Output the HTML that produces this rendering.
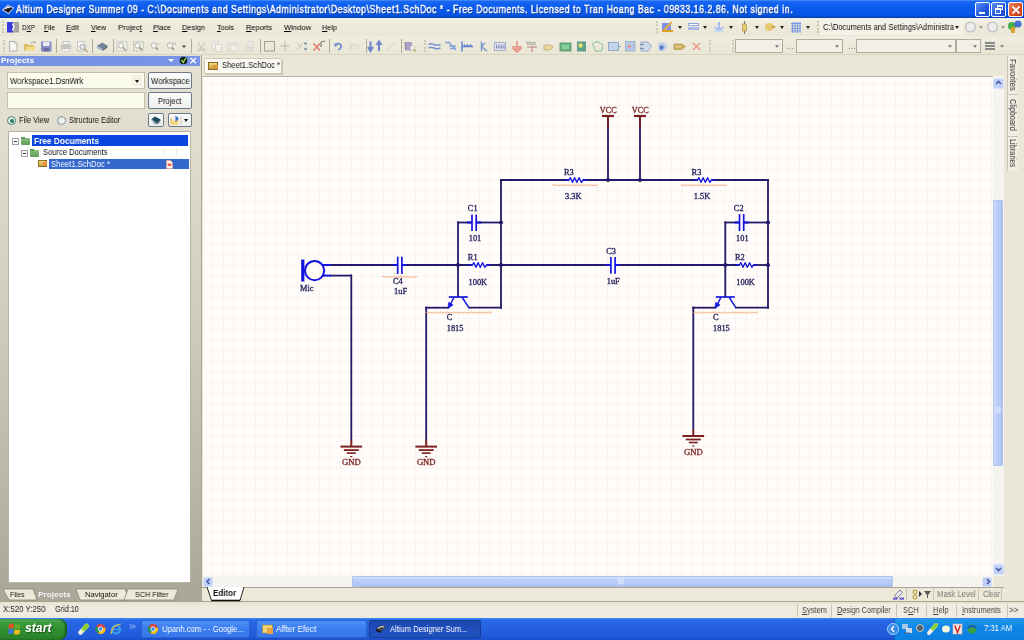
<!DOCTYPE html>
<html><head><meta charset="utf-8"><style>*{margin:0;padding:0;box-sizing:border-box}
html,body{width:1024px;height:640px;overflow:hidden;background:#ECE9D8;font-family:"Liberation Sans",sans-serif;font-size:8px;color:#000;position:relative}
.a{position:absolute}
.t{position:absolute;white-space:nowrap;line-height:1;will-change:transform}
u{text-decoration:underline;text-underline-offset:1px;text-decoration-thickness:1px}
#title{left:0;top:0;width:1024px;height:18px;background:linear-gradient(#4A92FA 0%,#1766F2 9%,#0A5CEE 40%,#0756E6 82%,#0048C8 94%,#003CA8 100%)}
.wb{width:14.5px;height:14.5px;border:1px solid #fff;border-radius:2px;background:linear-gradient(135deg,#5A8EF8,#2458E0 60%,#1A48C8)}
#menu{left:0;top:18px;width:1024px;height:18px;background:linear-gradient(#F4F2E8,#EDEADB 40%,#EAE7D6)}
#tb{left:0;top:36px;width:1024px;height:19px;background:linear-gradient(#EFEDE1,#E9E6D5);border-bottom:1px solid #D8D4C2}
.grip{width:2px;border-left:2px dotted #CDC9B6}
.sep{width:1px;background:#B0AC98}
.combo{background:#F2F0E6;border:1px solid #B0AC9A}
#lp{left:0;top:55px;width:202px;height:546px;background:linear-gradient(#E6E2D3 0,#E2DECF 76px,#D2CEBE 250px,#BCB8A8 420px,#ACA899 528px)}
#lph{left:0;top:55.5px;width:200px;height:10px;background:linear-gradient(90deg,#7491E2,#7893E6 70%,#7B96E8)}
.lbox{background:#FCFCEE;border:1px solid #C4C0AC}
.btn{background:linear-gradient(#FAFBFA,#EEF0EE);border:1px solid #6A7888;border-radius:2px}
.radio{width:9px;height:9px;border-radius:50%;border:1px solid #7898A8;background:linear-gradient(135deg,#D8DCD4,#FFF)}
#doc{left:202px;top:55px;width:802px;height:546px;background:#EAE7D8}
.doctab{background:#FBFAF2;border:1px solid #D0CCB8;border-radius:2px;box-shadow:1px 1px 0 #C8C4B0}
.sbtn{background:#C0D0F8;border:1px solid #D8E2FA;border-radius:2px}
#rp{left:1004px;top:55px;width:20px;height:546px;background:#EAE7D8}
#status{left:0;top:602px;width:1024px;height:16px;background:linear-gradient(#E6E3D2,#EFEDE2 40%,#EEEBDD)}
#task{left:0;top:618px;width:1024px;height:22px;background:linear-gradient(#3C8AF8 0%,#2A68E8 10%,#2460E0 50%,#215AD8 85%,#1A4EC8 100%)}
#start{left:0;top:619px;width:67px;height:21px;background:linear-gradient(#5AB05A 0%,#3A9A3A 20%,#2E8E2E 60%,#2A7E2A 100%);border-radius:0 8px 8px 0;box-shadow:inset -2px 0 2px #1A5A1A}
.tbtn{background:linear-gradient(#4C8EF8,#3A7CF0 50%,#3878EC);border-radius:2px;border:1px solid #2A60D0}
.tbtn.act{background:linear-gradient(#1A48B0,#1E4EBA 50%,#2052C0);border-color:#183C98}
#tray{left:894px;top:619px;width:130px;height:21px;background:linear-gradient(#1AA0F0,#0E8AE8 40%,#0C84E4);border-left:1px solid #0A5AC8;opacity:.9}
</style></head><body>
<div class="a" id="title"></div>
<svg class="a" style="left:1px;top:2px" width="14" height="14" viewBox="0 0 14 14">
<path d="M1.5 8 L7 3.5 L12.5 6 L7.5 11.5 Z" fill="#1A1A22" stroke="#B8C8E8" stroke-width="1.1"/><path d="M4 7 L7 5 L9 5.8" stroke="#F0F0F0" stroke-width="1.3" fill="none"/></svg>
<div class="t" style="left:16.1px;top:4.84px;font-size:10.47px;color:#fff;font-weight:normal;letter-spacing:0.6px;-webkit-text-stroke:0.45px #fff;text-shadow:1px 1px 0 #0A2A80;transform:scaleX(0.8376);transform-origin:0 0;">Altium Designer Summer 09 - C:\Documents and Settings\Administrator\Desktop\Sheet1.SchDoc * - Free Documents. Licensed to Tran Hoang Bac - 09833.16.2.86. Not signed in.</div>
<div class="a wb" style="left:975px;top:2px"><div class="a" style="left:3px;top:9px;width:6px;height:2px;background:#fff"></div></div>
<div class="a wb" style="left:991px;top:2px"><div class="a" style="left:5px;top:2px;width:6px;height:5px;border:1px solid #fff;border-top-width:2px"></div><div class="a" style="left:2.5px;top:5px;width:6px;height:6px;border:1px solid #fff;border-top-width:2px;background:#3A6CE8"></div></div>
<div class="a wb" style="left:1008px;top:2px;background:linear-gradient(135deg,#E8805A,#D84A20 60%,#C03A10)"><svg class="a" style="left:2px;top:2px" width="10" height="10"><path d="M1.5 1.5L8.5 8.5M8.5 1.5L1.5 8.5" stroke="#fff" stroke-width="1.8"/></svg></div>
<div class="a" id="menu"></div>
<div class="a grip" style="left:2px;top:21px;height:12px"></div>
<svg class="a" style="left:6px;top:21px" width="14" height="12"><rect x="1" y="1" width="6" height="10.5" fill="#3C3CDC"/><rect x="7" y="1" width="6" height="10.5" fill="#A4A4A4"/><path d="M6.5 2.5 Q9 6 6.5 9.5" stroke="#F4F4F4" stroke-width="1.6" fill="none"/></svg>
<div class="t" style="left:22px;top:23.73px;font-size:7.99px;color:#000;;transform:scaleX(0.7909);transform-origin:0 0;">D<u>X</u>P</div>
<div class="t" style="left:44px;top:23.73px;font-size:7.99px;color:#000;;transform:scaleX(0.8533);transform-origin:0 0;"><u>F</u>ile</div>
<div class="t" style="left:66px;top:23.73px;font-size:7.99px;color:#000;;transform:scaleX(0.9444);transform-origin:0 0;"><u>E</u>dit</div>
<div class="t" style="left:91px;top:23.73px;font-size:7.99px;color:#000;;transform:scaleX(0.8735);transform-origin:0 0;"><u>V</u>iew</div>
<div class="t" style="left:117.9px;top:23.73px;font-size:7.99px;color:#000;;transform:scaleX(0.9614);transform-origin:0 0;">Projec<u>t</u></div>
<div class="t" style="left:153px;top:23.73px;font-size:7.99px;color:#000;;transform:scaleX(0.9007);transform-origin:0 0;"><u>P</u>lace</div>
<div class="t" style="left:182px;top:23.73px;font-size:7.99px;color:#000;;transform:scaleX(0.9246);transform-origin:0 0;"><u>D</u>esign</div>
<div class="t" style="left:217px;top:23.73px;font-size:7.99px;color:#000;;transform:scaleX(0.9112);transform-origin:0 0;"><u>T</u>ools</div>
<div class="t" style="left:246px;top:23.73px;font-size:7.99px;color:#000;;transform:scaleX(0.9291);transform-origin:0 0;"><u>R</u>eports</div>
<div class="t" style="left:284px;top:23.73px;font-size:7.99px;color:#000;;transform:scaleX(0.9500);transform-origin:0 0;"><u>W</u>indow</div>
<div class="t" style="left:322px;top:23.73px;font-size:7.99px;color:#000;;transform:scaleX(0.9125);transform-origin:0 0;"><u>H</u>elp</div>
<div class="a grip" style="left:656px;top:21px;height:12px"></div>
<div class="a grip" style="left:817px;top:21px;height:12px"></div>
<div class="a" style="left:820px;top:20px;width:143px;height:15px;background:#F4F2E8"></div>
<div class="t" style="left:822.9px;top:23.32px;font-size:8.72px;color:#111;;transform:scaleX(0.8748);transform-origin:0 0;">C:\Documents and Settings\Administra</div>
<div class="a" style="left:677.5px;top:25.5px;width:0;height:0;border-left:2.5px solid transparent;border-right:2.5px solid transparent;border-top:3px solid #222"></div>
<div class="a" style="left:702.5px;top:25.5px;width:0;height:0;border-left:2.5px solid transparent;border-right:2.5px solid transparent;border-top:3px solid #222"></div>
<div class="a" style="left:728.5px;top:25.5px;width:0;height:0;border-left:2.5px solid transparent;border-right:2.5px solid transparent;border-top:3px solid #222"></div>
<div class="a" style="left:754.5px;top:25.5px;width:0;height:0;border-left:2.5px solid transparent;border-right:2.5px solid transparent;border-top:3px solid #222"></div>
<div class="a" style="left:779.5px;top:25.5px;width:0;height:0;border-left:2.5px solid transparent;border-right:2.5px solid transparent;border-top:3px solid #222"></div>
<div class="a" style="left:805.5px;top:25.5px;width:0;height:0;border-left:2.5px solid transparent;border-right:2.5px solid transparent;border-top:3px solid #222"></div>
<div class="a" style="left:954.5px;top:25.5px;width:0;height:0;border-left:2.5px solid transparent;border-right:2.5px solid transparent;border-top:3px solid #222"></div>
<div class="a" style="left:978.5px;top:25.5px;width:0;height:0;border-left:2.5px solid transparent;border-right:2.5px solid transparent;border-top:3px solid #999"></div>
<div class="a" style="left:1000.5px;top:25.5px;width:0;height:0;border-left:2.5px solid transparent;border-right:2.5px solid transparent;border-top:3px solid #999"></div>
<svg class="a" style="left:660px;top:20px" width="160" height="15" viewBox="660 20 160 15">
<rect x="662" y="23" width="9" height="8" fill="#8090E8"/><path d="M662 31 L673 31" stroke="#D8A020" stroke-width="2"/><path d="M664 30 L672 22" stroke="#E0B040" stroke-width="2"/>
<rect x="688" y="23" width="11" height="3" fill="#90A8E0"/><rect x="688" y="27" width="11" height="3" fill="#A8B8E8"/><rect x="689" y="24" width="9" height="1" fill="#fff"/>
<path d="M719 22 L719 31 M715 27 L719 31 L723 27" stroke="#A8C0F0" stroke-width="2" fill="none"/><path d="M714 31 L724 31" stroke="#C8D8F8" stroke-width="1.5"/>
<rect x="742.5" y="24" width="4" height="7" fill="#E8C870" stroke="#A89040" stroke-width=".6"/><path d="M744.5 21 V24 M744.5 31 V34" stroke="#777" stroke-width="1"/>
<circle cx="769" cy="27" r="4" fill="#E8C870"/><path d="M772 25 L776 27 L772 29Z" fill="#C8A040"/>
<path d="M791 23.5 H801 M791 26 H801 M791 28.5 H801 M791 31 H801 M792.5 22 V33 M795 22 V33 M797.5 22 V33 M800 22 V33" stroke="#7898E0" stroke-width="1"/>
<circle cx="970" cy="27" r="5" fill="none" stroke="#C8C8C8" stroke-width="2" transform="translate(-160 0)" opacity="0"/>
</svg>
<svg class="a" style="left:962px;top:19px" width="62" height="16" viewBox="962 19 62 16">
<circle cx="970.5" cy="27" r="4.8" fill="#EDEDED" stroke="#C4C4C4" stroke-width="1.6"/><circle cx="992.5" cy="27" r="4.8" fill="#EDEDED" stroke="#C4C4C4" stroke-width="1.6"/>
<circle cx="1012" cy="26" r="4" fill="#48B048"/><circle cx="1018" cy="24" r="3.6" fill="#4870D0"/><rect x="1011" y="27" width="4" height="6" fill="#E0A030"/></svg>
<div class="a" id="tb"></div>
<div class="a grip" style="left:3px;top:40px;height:12px"></div>
<div class="a grip" style="left:709px;top:40px;height:12px"></div>
<div class="a grip" style="left:732px;top:40px;height:12px"></div>
<div class="a grip" style="left:424px;top:40px;height:12px"></div>
<div class="a sep" style="left:56px;top:39px;height:14px"></div>
<div class="a sep" style="left:92px;top:39px;height:14px"></div>
<div class="a sep" style="left:113px;top:39px;height:14px"></div>
<div class="a sep" style="left:191px;top:39px;height:14px"></div>
<div class="a sep" style="left:260px;top:39px;height:14px"></div>
<div class="a sep" style="left:329px;top:39px;height:14px"></div>
<div class="a sep" style="left:366px;top:39px;height:14px"></div>
<div class="a sep" style="left:401px;top:39px;height:14px"></div>
<svg class="a" style="left:0;top:36px;opacity:.78" width="1024" height="19" viewBox="0 36 1024 19">
<!-- new doc -->
<path d="M9.5 41.5 H15 L17 43.5 V51 H9.5 Z" fill="#FDFDFD" stroke="#8C8C8C" stroke-width=".8"/><path d="M15 41.5 V43.5 H17" fill="#ddd" stroke="#8C8C8C" stroke-width=".6"/>
<!-- open -->
<path d="M24 44 H28 L29 45 H34 V51 H24Z" fill="#D8B448"/><path d="M25 51 L27 46.5 H36 L34 51Z" fill="#F2D878"/><path d="M31 43 Q34 40.5 36 43" stroke="#6A8A40" stroke-width="1" fill="none"/>
<!-- save -->
<rect x="41" y="41.5" width="10.5" height="10" fill="#6A72C0" rx=".6"/><rect x="43" y="42" width="6.5" height="4" fill="#E8ECF8"/><rect x="43.5" y="48" width="5.5" height="3.5" fill="#4A4A90"/>
<!-- print -->
<rect x="63" y="41.5" width="6" height="3" fill="#F4F4F4" stroke="#999" stroke-width=".6"/><path d="M60.5 45 H71.5 L70.5 50.5 H61.5Z" fill="#BCBCBC"/><rect x="62" y="49" width="8" height="2.5" fill="#fff" stroke="#AAA" stroke-width=".5"/>
<!-- preview -->
<path d="M77.5 41.5 H84 L85 42.5 V51 H77.5Z" fill="#F6F6F6" stroke="#A8A8A8" stroke-width=".7"/><circle cx="82.5" cy="47" r="2.6" fill="#E0E8F0" stroke="#8A8A8A" stroke-width=".9"/><path d="M84.5 49 L87.5 52" stroke="#B09050" stroke-width="1.6"/>
<!-- board -->
<path d="M97 46 L102 42.5 L107.5 45.5 L102.5 49Z" fill="#506A88"/><path d="M97 46 L102.5 49 V51 L97 48Z" fill="#8AA0C0"/><path d="M107.5 45.5 L102.5 49 V51 L107.5 47.5Z" fill="#2E4058"/>
<!-- zoom icons -->
<rect x="117" y="41.5" width="10" height="9.5" fill="#F2F2EE" stroke="#B8B8B0" stroke-width=".7"/><circle cx="121" cy="45.5" r="2.6" fill="#fff" stroke="#A0A0A0" stroke-width="1"/><path d="M123 47.5 L126 50.5" stroke="#8A8A8A" stroke-width="1.4"/>
<rect x="133.5" y="41.5" width="10" height="9.5" fill="none" stroke="#8A8A8A" stroke-width=".8" stroke-dasharray="1 1"/><circle cx="137.5" cy="45.5" r="2.6" fill="#fff" stroke="#A0A0A0" stroke-width="1"/><path d="M139.5 47.5 L142 50" stroke="#6A6A6A" stroke-width="1.4"/>
<circle cx="154" cy="45.5" r="2.8" fill="#F4F4F4" stroke="#A8A8A8" stroke-width="1"/><path d="M156 47.5 L158 50" stroke="#7A7A6A" stroke-width="1.4"/><path d="M157 44 H160" stroke="#ccc"/>
<circle cx="170" cy="45.5" r="2.8" fill="#F4F4F4" stroke="#A8A8A8" stroke-width="1"/><path d="M172 47.5 L174 50" stroke="#7A7A6A" stroke-width="1.4"/><path d="M173.5 42 V45 M175.5 42 V45" stroke="#bbb"/>
<path d="M182 45.5 H186 L184 48Z" fill="#111"/>
<!-- cut/copy/paste (disabled) -->
<path d="M198 42 L202 50 M205 42 L200 50" stroke="#C4C4C0" stroke-width="1.3"/><circle cx="199" cy="50" r="1.3" fill="none" stroke="#C0C0BC"/><circle cx="204" cy="50" r="1.3" fill="none" stroke="#C0C0BC"/>
<rect x="212" y="42" width="6" height="7" fill="#F0F0EC" stroke="#C8C8C4" stroke-width=".7"/><rect x="215.5" y="44.5" width="6" height="7" fill="#F4F4F0" stroke="#C8C8C4" stroke-width=".7"/>
<rect x="228" y="43" width="8" height="8" fill="#E8E6DE" stroke="#C8C8C0" stroke-width=".7"/><rect x="231" y="45" width="6" height="6" fill="#F4F4F0" stroke="#CCC" stroke-width=".6"/>
<path d="M245 47 H253 V51 H245Z" fill="#E0E0DC" stroke="#C8C8C4" stroke-width=".6"/><rect x="248" y="41.5" width="5" height="5.5" fill="#ECECE8" stroke="#C8C8C4" stroke-width=".6"/>
<!-- select rect -->
<rect x="264.5" y="41.5" width="10" height="9.5" fill="none" stroke="#8A8A86" stroke-width="1"/>
<path d="M285 41 V51 M280.5 46 H289.5" stroke="#A8A8A4" stroke-width="1"/>
<path d="M297 50 L303 43 M297 43 L300 46" stroke="#B8B8B4" stroke-width="1"/><circle cx="305.5" cy="43.5" r="1.3" fill="#5A7A8A"/><circle cx="305.5" cy="49" r="1.3" fill="#5A7A8A"/>
<path d="M313.5 43.5 L320 50.5 M320 43.5 L313.5 50.5" stroke="#E06050" stroke-width="1.6"/><path d="M321 42 V47 M321 42 L325 41" stroke="#404040" stroke-width=".9"/>
<!-- undo/redo -->
<path d="M335 45 Q338 42 341 45 Q342 48 338 50" stroke="#5A7AC8" stroke-width="1.8" fill="none"/><path d="M333.5 43.5 L335 47 L338 45Z" fill="#5A7AC8"/>
<path d="M351 43 V50 M351 45 H358 V49" stroke="#D0D0CC" stroke-width="1.2" fill="none"/>
<!-- arrows -->
<path d="M370.5 41.5 V50 M368 47 L370.5 51 L373 47" stroke="#4A6AC8" stroke-width="2" fill="none"/><path d="M379 42 V51 M376.5 45 L379 41.5 L381.5 45" stroke="#4A6AC8" stroke-width="2" fill="none"/>
<path d="M387 51 L395 42" stroke="#D8D8D4" stroke-width="1.6"/>
<!-- component -->
<rect x="405" y="42" width="7" height="8.5" fill="#9A8AC0"/><path d="M404.5 43 H406 M404.5 45.5 H406 M404.5 48 H406" stroke="#555"/><circle cx="412.5" cy="48" r="2.5" fill="#F0F0F0" stroke="#B0B0B0" stroke-width=".6"/><path d="M413.5 49 L416 51.5" stroke="#90A040" stroke-width="1.3"/>
<!-- wire etc -->
<path d="M428.5 44.5 Q431 43 434 44.5 T440.5 44.5 M428.5 48 Q431 46.5 434 48 T440.5 48" stroke="#5A80D0" stroke-width="1.6" fill="none"/>
<path d="M445 42.5 H450 M449 42.5 L456 50 M449 46 L456 46 M450 48.5 L456 48.5" stroke="#6A90D8" stroke-width="1.5" fill="none"/>
<path d="M462 41.5 V51.5 M462 46.5 H473 M464 44.5 L465.5 46.5 M467 44.5 L468.5 46.5 M470 44.5 L471.5 46.5" stroke="#3A60C8" stroke-width="1.4" fill="none"/>
<path d="M481.5 41.5 V51 M481.5 46.5 L487 51 M481.5 46.5 L485 43" stroke="#5A80D0" stroke-width="1.5" fill="none"/>
<rect x="494.5" y="42.5" width="11" height="8" fill="#E4E8F4" stroke="#7A88C0" stroke-width=".8"/><path d="M496.5 44 V49 M499 44 V49 M501.5 44 V49 M504 44 V49 M496 47 H504.5" stroke="#5A6AB8" stroke-width=".8"/>
<path d="M517 41 V47 M512 47 H522 M513.5 49 H520.5 L517 52Z" stroke="#E87A6A" stroke-width="1.5" fill="#F0A090"/>
<text x="526" y="44.5" font-size="6" font-family="Liberation Sans" fill="#555">Vcc</text><path d="M527 47 H537 M532 47 V52" stroke="#B06060" stroke-width="1.1"/>
<path d="M544 45 H550 L553.5 47 L550 50 H544Z" fill="#E8D090" stroke="#B89850" stroke-width=".7"/>
<rect x="560" y="43" width="11" height="8" fill="#48A868" stroke="#2A7A48" stroke-width=".8"/><rect x="562" y="45" width="7" height="4" fill="#70C890"/>
<rect x="577" y="41.5" width="9" height="10" fill="#3A8A78"/><circle cx="580.5" cy="45.5" r="2.2" fill="#E8E040"/>
<path d="M594 47 Q591 43 595 42.5 Q598 40.5 600 43.5 Q604 44 602 48 Q603 51.5 598 51 Q594 52 594 47Z" fill="none" stroke="#80C090" stroke-width="1.2"/>
<rect x="608.5" y="42.5" width="10" height="8" fill="#B8D0F0" stroke="#6A88B8" stroke-width=".8"/><path d="M618.5 46.5 H621" stroke="#6A88B8"/>
<rect x="625.5" y="41.5" width="9.5" height="9.5" fill="#A8C0E8" stroke="#7890C0" stroke-width=".7"/><path d="M628 44.5 L632 46.5 L628 48.5Z" fill="#E08070"/>
<path d="M641 42 H648 L651.5 46.5 L648 51 H641Z" fill="#C8D8F0" stroke="#6A88C0" stroke-width=".8"/><path d="M640 44.5 H644 M640 48.5 H644" stroke="#5A70A0" stroke-width="1"/>
<path d="M658.5 42.5 H664 L667.5 46.5 L664 51 H658.5Z" fill="#B0C8F0"/><circle cx="661.5" cy="47.5" r="2.2" fill="#3A5AC8"/>
<path d="M674 44 H682 L685.5 46.5 L682 49.5 H674Z" fill="#C8A040" stroke="#907020" stroke-width=".6"/><path d="M676 45.5 V48 M678 45.5 V48 M680 45.5 V48" stroke="#F0E0A0" stroke-width=".8"/>
<path d="M693 43 L700 50 M700 43 L693 50" stroke="#F08070" stroke-width="1.4"/>
</svg>

<div class="a combo" style="left:735px;top:39px;width:48px;height:14px"></div>
<div class="a" style="left:774.5px;top:44.5px;width:0;height:0;border-left:2.5px solid transparent;border-right:2.5px solid transparent;border-top:3px solid #888"></div>
<div class="a combo" style="left:796px;top:39px;width:47px;height:14px"></div>
<div class="a" style="left:834.5px;top:44.5px;width:0;height:0;border-left:2.5px solid transparent;border-right:2.5px solid transparent;border-top:3px solid #888"></div>
<div class="a combo" style="left:856px;top:39px;width:100px;height:14px"></div>
<div class="a" style="left:947.5px;top:44.5px;width:0;height:0;border-left:2.5px solid transparent;border-right:2.5px solid transparent;border-top:3px solid #888"></div>
<div class="a combo" style="left:956px;top:39px;width:25px;height:14px"></div>
<div class="a" style="left:972.5px;top:44.5px;width:0;height:0;border-left:2.5px solid transparent;border-right:2.5px solid transparent;border-top:3px solid #888"></div>
<div class="t" style="left:786px;top:43.23px;font-size:8.00px;color:#555;;">…</div>
<div class="t" style="left:848px;top:43.23px;font-size:8.00px;color:#555;;">…</div>
<div class="a" style="left:985px;top:42px;width:10px;height:1.5px;background:#888;box-shadow:0 3px 0 #888,0 6px 0 #888"></div>
<div class="a" style="left:999.5px;top:44.5px;width:0;height:0;border-left:2.5px solid transparent;border-right:2.5px solid transparent;border-top:3px solid #888"></div>
<div class="a" id="lp"></div>
<div class="a" id="lph"></div>
<div class="t" style="left:1px;top:56.76px;font-size:7.85px;color:#fff;font-weight:bold;transform:scaleX(1.0677);transform-origin:0 0;">Projects</div>
<div class="a" style="left:168px;top:59px;width:0;height:0;border-left:3.3px solid transparent;border-right:3.3px solid transparent;border-top:3.8px solid #fff"></div>
<svg class="a" style="left:179px;top:56px" width="9" height="9"><circle cx="4.5" cy="4.5" r="3.8" fill="#102010"/><path d="M2.5 4 L4.2 6.5 L6.8 2" stroke="#9ADA5A" stroke-width="1.4" fill="none"/></svg>
<svg class="a" style="left:189px;top:56px" width="9" height="9"><path d="M1.5 2L7 7.2M7 2L1.5 7.2" stroke="#fff" stroke-width="1.2"/></svg>
<div class="a lbox" style="left:7px;top:72px;width:138px;height:17px"></div>
<div class="t" style="left:10.3px;top:76.48px;font-size:9.59px;color:#111;;transform:scaleX(0.8180);transform-origin:0 0;">Workspace1.DsnWrk</div>
<div class="a" style="left:132px;top:75px;width:10px;height:11px;background:#F2F0E4"></div>
<div class="a" style="left:134.6px;top:80px;width:0;height:0;border-left:2.8px solid transparent;border-right:2.8px solid transparent;border-top:3.4px solid #111"></div>
<div class="a lbox" style="left:7px;top:92px;width:138px;height:17px"></div>
<div class="a btn" style="left:148px;top:72px;width:44px;height:17px"></div>
<div class="t" style="left:150.5px;top:76.89px;font-size:8.87px;color:#111;;transform:scaleX(0.8764);transform-origin:0 0;">Workspace</div>
<div class="a btn" style="left:148px;top:92px;width:44px;height:17px"></div>
<div class="t" style="left:158.1px;top:96.89px;font-size:8.87px;color:#111;;transform:scaleX(0.8485);transform-origin:0 0;">Project</div>
<div class="a radio" style="left:7px;top:116px;border-color:#4A7A70;background:#DDF4EE"><div class="a" style="left:1.5px;top:1.5px;width:4px;height:4px;border-radius:50%;background:#2E7A5E"></div></div>
<div class="t" style="left:18.5px;top:116.17px;font-size:9.01px;color:#111;;transform:scaleX(0.8333);transform-origin:0 0;">File View</div>
<div class="a radio" style="left:57px;top:116px"></div>
<div class="t" style="left:68.7px;top:116.17px;font-size:9.01px;color:#111;;transform:scaleX(0.8204);transform-origin:0 0;">Structure Editor</div>
<div class="a btn" style="left:148px;top:113px;width:16px;height:14px"></div>
<svg class="a" style="left:150px;top:114px" width="12" height="12"><path d="M2 8.5 L6.5 6 L11 8.5 L6.5 11Z" fill="#A8B0B4"/><path d="M1.5 5 L5 2.5 L10.5 5.5 L6.5 8.5Z" fill="#1E4A5A"/><path d="M1.5 5 L6.5 8.5 L6.5 9.5 L1.5 6Z" fill="#3A7A80"/><path d="M10.5 5.5 L6.5 8.5 V9.5 L10.5 6.5Z" fill="#102838"/></svg>
<div class="a btn" style="left:167.5px;top:113px;width:24.5px;height:14px"></div>
<svg class="a" style="left:169px;top:114px" width="22" height="12"><path d="M1.5 4 H4 L5 5 H9 V10.5 H1.5Z" fill="#E8C060"/><path d="M1.5 10.5 L3 6.5 H10 L8.5 10.5Z" fill="#F4D880"/><rect x="3" y="1.5" width="4" height="5" fill="#F0F0F0"/><path d="M6.5 1.5 L10 4.5 L6.5 8Z" fill="#3A70C8"/><path d="M12 2 V11" stroke="#C0C0C0" stroke-width=".8"/></svg>
<div class="a" style="left:183.5px;top:118.5px;width:0;height:0;border-left:2.5px solid transparent;border-right:2.5px solid transparent;border-top:3px solid #111"></div>
<div class="a" style="left:8px;top:131px;width:183px;height:452px;background:#fff;border:1px solid #B8B4A4"></div>
<div class="a" style="left:31.5px;top:135px;width:156.6px;height:11px;background:#0B44DE"></div>
<div class="a" style="left:48.5px;top:158.5px;width:140px;height:10.5px;background:#3468CC"></div>
<div class="a" style="left:12px;top:137.5px;width:7px;height:7px;border:1px solid #A0A0A0;background:#fff"><div class="a" style="left:1px;top:2px;width:3px;height:1px;background:#333"></div></div>
<div class="a" style="left:20.5px;top:149.5px;width:7px;height:7px;border:1px solid #A0A0A0;background:#fff"><div class="a" style="left:1px;top:2px;width:3px;height:1px;background:#333"></div></div>
<div class="a" style="left:21px;top:138px;width:9px;height:7px;background:linear-gradient(#8CC080,#5E9A58);border-radius:1px"></div><div class="a" style="left:21px;top:136.5px;width:4px;height:2px;background:#5E9A58"></div>
<div class="a" style="left:29.5px;top:150px;width:9px;height:7px;background:linear-gradient(#8CC080,#5E9A58);border-radius:1px"></div><div class="a" style="left:29.5px;top:148.5px;width:4px;height:2px;background:#5E9A58"></div>
<div class="a" style="left:38px;top:160px;width:9px;height:7px;background:linear-gradient(#F0D880,#C8A040);border:1px solid #907020"></div><div class="a" style="left:43px;top:162px;width:4px;height:3px;background:#E89030"></div>
<div class="t" style="left:33.9px;top:137.24px;font-size:8.58px;color:#fff;font-weight:bold;transform:scaleX(0.9658);transform-origin:0 0;">Free Documents</div>
<div class="t" style="left:42.5px;top:147.77px;font-size:9.01px;color:#111;;transform:scaleX(0.8426);transform-origin:0 0;">Source Documents</div>
<div class="t" style="left:50.7px;top:159.54px;font-size:8.58px;color:#fff;;transform:scaleX(0.9016);transform-origin:0 0;">Sheet1.SchDoc *</div>
<svg class="a" style="left:166px;top:159.5px" width="7" height="9"><path d="M0.5 0.5 H4.5 L6.5 2.5 V8.5 H0.5Z" fill="#FFF4F0" stroke="#F0A090" stroke-width=".8"/><rect x="1.8" y="3.5" width="3.5" height="2.5" fill="#E86040"/></svg>
<div class="a" style="left:163px;top:147px;width:1px;height:10px;background:#ECECEC"></div><div class="a" style="left:176px;top:147px;width:1px;height:10px;background:#ECECEC"></div>
<div class="a" style="left:0;top:584px;width:202px;height:17px;background:#ACA899"></div>
<svg class="a" style="left:0;top:588px" width="202" height="13" viewBox="0 588 202 13">
<path d="M3 589 L33 589 L37 600 L9 600 Z" fill="#ECE9D8" stroke="#8A8676" stroke-width=".8"/>
<path d="M76 589 L125 589 L129 600 L80 600 Z" fill="#ECE9D8" stroke="#8A8676" stroke-width=".8"/>
<path d="M128 589 L178 589 L174 600 L124 600 Z" fill="#ECE9D8" stroke="#8A8676" stroke-width=".8"/>
</svg>
<div class="t" style="left:9.7px;top:591.15px;font-size:7.27px;color:#111;;transform:scaleX(0.9469);transform-origin:0 0;">Files</div>
<div class="t" style="left:37.8px;top:591.25px;font-size:7.27px;color:#F4F4F4;font-weight:bold;transform:scaleX(1.1354);transform-origin:0 0;">Projects</div>
<div class="t" style="left:85.3px;top:591.00px;font-size:7.56px;color:#111;;transform:scaleX(1.0151);transform-origin:0 0;">Navigator</div>
<div class="t" style="left:134.5px;top:591.00px;font-size:7.56px;color:#111;;transform:scaleX(0.9594);transform-origin:0 0;">SCH Filter</div>
<div class="a" id="doc"></div>
<div class="a" style="left:201px;top:55px;width:1px;height:546px;background:#A8A498"></div>
<div class="a doctab" style="left:204px;top:58px;width:78px;height:16px"></div>
<div class="a" style="left:208px;top:62px;width:10px;height:8px;background:linear-gradient(#F4DC80,#C89838);border:1px solid #886620"></div><div class="a" style="left:213px;top:65px;width:5px;height:4px;background:#D89838"></div>
<div class="t" style="left:221.5px;top:62.19px;font-size:8.28px;color:#111;;transform:scaleX(0.9213);transform-origin:0 0;">Sheet1.SchDoc *</div>
<div class="a" style="left:202px;top:75.5px;width:802px;height:1.2px;background:#B8B4A4"></div>
<svg class="a" style="left:203px;top:77px;will-change:transform" width="790" height="499" viewBox="203 77 790 499" font-family="Liberation Serif">
<defs><pattern id="g" x="-1" y="-1.6" width="10.667" height="10.667" patternUnits="userSpaceOnUse"><path d="M0.5 0 V10.667 M0 0.5 H10.667" stroke="#F6F3F0" stroke-width="1" fill="none"/></pattern></defs>
<rect x="203" y="76" width="790" height="500" fill="#FFFCF9"/>
<rect x="203" y="76" width="790" height="500" fill="url(#g)"/>
<line x1="500" y1="180" x2="569" y2="180" stroke="#221A68" stroke-width="1.8"/>
<line x1="583" y1="180" x2="697.5" y2="180" stroke="#221A68" stroke-width="1.8"/>
<line x1="711.5" y1="180" x2="769" y2="180" stroke="#221A68" stroke-width="1.8"/>
<line x1="501" y1="179" x2="501" y2="308.7" stroke="#221A68" stroke-width="1.8"/>
<line x1="768" y1="179" x2="768" y2="308.7" stroke="#221A68" stroke-width="1.8"/>
<line x1="608" y1="127" x2="608" y2="180" stroke="#221A68" stroke-width="1.8"/>
<line x1="640" y1="127" x2="640" y2="180" stroke="#221A68" stroke-width="1.8"/>
<line x1="458" y1="221.5" x2="458" y2="297" stroke="#221A68" stroke-width="1.8"/>
<line x1="457" y1="222.5" x2="472" y2="222.5" stroke="#221A68" stroke-width="1.8"/>
<line x1="476.2" y1="222.5" x2="501" y2="222.5" stroke="#221A68" stroke-width="1.8"/>
<line x1="725.3" y1="221.5" x2="725.3" y2="297" stroke="#221A68" stroke-width="1.8"/>
<line x1="724.3" y1="222.5" x2="739.5" y2="222.5" stroke="#221A68" stroke-width="1.8"/>
<line x1="743.7" y1="222.5" x2="768" y2="222.5" stroke="#221A68" stroke-width="1.8"/>
<line x1="330" y1="265" x2="397.7" y2="265" stroke="#221A68" stroke-width="1.8"/>
<line x1="401.9" y1="265" x2="472.5" y2="265" stroke="#221A68" stroke-width="1.8"/>
<line x1="486.5" y1="265" x2="610.9" y2="265" stroke="#221A68" stroke-width="1.8"/>
<line x1="615.1" y1="265" x2="739.5" y2="265" stroke="#221A68" stroke-width="1.8"/>
<line x1="753.5" y1="265" x2="768" y2="265" stroke="#221A68" stroke-width="1.8"/>
<line x1="330" y1="275.6" x2="352" y2="275.6" stroke="#221A68" stroke-width="1.8"/>
<line x1="351.3" y1="274.6" x2="351.3" y2="440" stroke="#221A68" stroke-width="1.8"/>
<line x1="425" y1="307.7" x2="449" y2="307.7" stroke="#221A68" stroke-width="1.8"/>
<line x1="426.2" y1="306.7" x2="426.2" y2="440" stroke="#221A68" stroke-width="1.8"/>
<line x1="468" y1="307.7" x2="502" y2="307.7" stroke="#221A68" stroke-width="1.8"/>
<line x1="692" y1="307.7" x2="716" y2="307.7" stroke="#221A68" stroke-width="1.8"/>
<line x1="693.3" y1="306.7" x2="693.3" y2="429" stroke="#221A68" stroke-width="1.8"/>
<line x1="735" y1="307.7" x2="769" y2="307.7" stroke="#221A68" stroke-width="1.8"/>
<circle cx="608" cy="180" r="2.1" fill="#221A68"/>
<circle cx="640" cy="180" r="2.1" fill="#221A68"/>
<circle cx="501" cy="222.5" r="2.1" fill="#221A68"/>
<circle cx="768" cy="222.5" r="2.1" fill="#221A68"/>
<circle cx="458" cy="265" r="2.1" fill="#221A68"/>
<circle cx="501" cy="265" r="2.1" fill="#221A68"/>
<circle cx="725.3" cy="265" r="2.1" fill="#221A68"/>
<circle cx="768" cy="265" r="2.1" fill="#221A68"/>
<circle cx="314.6" cy="270.6" r="9.6" stroke="#1414E0" stroke-width="2" fill="none"/>
<line x1="302.8" y1="259.5" x2="302.8" y2="281.5" stroke="#1414E0" stroke-width="3.2"/>
<line x1="323" y1="265" x2="331" y2="265" stroke="#1414E0" stroke-width="2"/>
<line x1="323" y1="275.6" x2="331" y2="275.6" stroke="#1414E0" stroke-width="2"/>
<text x="300" y="290.7" fill="#24225E" stroke="#24225E" stroke-width="0.3" font-size="8.4">Mic</text>
<line x1="397.7" y1="256.7" x2="397.7" y2="274.1" stroke="#1414E0" stroke-width="1.7"/>
<line x1="401.90000000000003" y1="256.7" x2="401.90000000000003" y2="274.1" stroke="#1414E0" stroke-width="1.7"/>
<line x1="392.8" y1="265" x2="397.7" y2="265" stroke="#1414E0" stroke-width="2"/>
<line x1="401.90000000000003" y1="265" x2="406.8" y2="265" stroke="#1414E0" stroke-width="2"/>
<line x1="472.0" y1="214.5" x2="472.0" y2="231" stroke="#1414E0" stroke-width="1.7"/>
<line x1="476.20000000000005" y1="214.5" x2="476.20000000000005" y2="231" stroke="#1414E0" stroke-width="1.7"/>
<line x1="467.1" y1="222.5" x2="472.0" y2="222.5" stroke="#1414E0" stroke-width="2"/>
<line x1="476.20000000000005" y1="222.5" x2="481.1" y2="222.5" stroke="#1414E0" stroke-width="2"/>
<line x1="610.9" y1="256.9" x2="610.9" y2="273.7" stroke="#1414E0" stroke-width="1.7"/>
<line x1="615.1" y1="256.9" x2="615.1" y2="273.7" stroke="#1414E0" stroke-width="1.7"/>
<line x1="606" y1="265" x2="610.9" y2="265" stroke="#1414E0" stroke-width="2"/>
<line x1="615.1" y1="265" x2="620" y2="265" stroke="#1414E0" stroke-width="2"/>
<line x1="739.5" y1="214.1" x2="739.5" y2="231" stroke="#1414E0" stroke-width="1.7"/>
<line x1="743.7" y1="214.1" x2="743.7" y2="231" stroke="#1414E0" stroke-width="1.7"/>
<line x1="734.6" y1="222.5" x2="739.5" y2="222.5" stroke="#1414E0" stroke-width="2"/>
<line x1="743.7" y1="222.5" x2="748.6" y2="222.5" stroke="#1414E0" stroke-width="2"/>
<text x="393" y="283.5" fill="#24225E" stroke="#24225E" stroke-width="0.3" font-size="8.4">C4</text>
<text x="394" y="294.2" fill="#24225E" stroke="#24225E" stroke-width="0.3" font-size="8.4">1uF</text>
<text x="467.8" y="211.2" fill="#24225E" stroke="#24225E" stroke-width="0.3" font-size="8.4">C1</text>
<text x="468.7" y="241.2" fill="#24225E" stroke="#24225E" stroke-width="0.3" font-size="8.4">101</text>
<text x="606.2" y="253.6" fill="#24225E" stroke="#24225E" stroke-width="0.3" font-size="8.4">C3</text>
<text x="606.7" y="283.6" fill="#24225E" stroke="#24225E" stroke-width="0.3" font-size="8.4">1uF</text>
<text x="733.8" y="211.3" fill="#24225E" stroke="#24225E" stroke-width="0.3" font-size="8.4">C2</text>
<text x="736" y="241.2" fill="#24225E" stroke="#24225E" stroke-width="0.3" font-size="8.4">101</text>
<path d="M468.5 265 L472.5 265 L473.9 262.7 L476.0 267.3 L478.1 262.7 L480.3 267.3 L482.6 262.7 L484.8 267.3 L486.5 265 L490.5 265" stroke="#1414E0" stroke-width="1.4" fill="none" stroke-linejoin="round"/>
<text x="467.8" y="260.1" fill="#24225E" stroke="#24225E" stroke-width="0.3" font-size="8.4">R1</text>
<text x="468.5" y="284.5" fill="#24225E" stroke="#24225E" stroke-width="0.3" font-size="8.4">100K</text>
<path d="M735.5 265 L739.5 265 L740.9 262.7 L743.0 267.3 L745.1 262.7 L747.3 267.3 L749.6 262.7 L751.8 267.3 L753.5 265 L757.5 265" stroke="#1414E0" stroke-width="1.4" fill="none" stroke-linejoin="round"/>
<text x="734.9" y="260.1" fill="#24225E" stroke="#24225E" stroke-width="0.3" font-size="8.4">R2</text>
<text x="736.3" y="284.5" fill="#24225E" stroke="#24225E" stroke-width="0.3" font-size="8.4">100K</text>
<path d="M565 180 L569 180 L570.4 177.7 L572.5 182.3 L574.6 177.7 L576.8 182.3 L579.1 177.7 L581.3 182.3 L583 180 L587 180" stroke="#1414E0" stroke-width="1.4" fill="none" stroke-linejoin="round"/>
<text x="563.9" y="175" fill="#24225E" stroke="#24225E" stroke-width="0.3" font-size="8.4">R3</text>
<text x="565" y="199" fill="#24225E" stroke="#24225E" stroke-width="0.3" font-size="8.4">3.3K</text>
<path d="M693.5 180 L697.5 180 L698.9 177.7 L701.0 182.3 L703.1 177.7 L705.3 182.3 L707.6 177.7 L709.8 182.3 L711.5 180 L715.5 180" stroke="#1414E0" stroke-width="1.4" fill="none" stroke-linejoin="round"/>
<text x="691.6" y="174.8" fill="#24225E" stroke="#24225E" stroke-width="0.3" font-size="8.4">R3</text>
<text x="693.8" y="198.7" fill="#24225E" stroke="#24225E" stroke-width="0.3" font-size="8.4">1.5K</text>
<text x="446.7" y="319.6" fill="#24225E" stroke="#24225E" stroke-width="0.3" font-size="8.4">C</text>
<text x="446.7" y="330.9" fill="#24225E" stroke="#24225E" stroke-width="0.3" font-size="8.4">1815</text>
<line x1="448.8" y1="297" x2="467.8" y2="297" stroke="#1414E0" stroke-width="1.7"/>
<line x1="453.8" y1="297.5" x2="448.8" y2="307.7" stroke="#1414E0" stroke-width="1.5"/>
<path d="M448.0 308.0 L448.7 302.3 L453.1 305.09999999999997 Z" stroke="#1414E0" stroke-width="0.6" fill="#1414E0"/>
<line x1="462.3" y1="297.5" x2="468.8" y2="307.7" stroke="#1414E0" stroke-width="1.5"/>
<text x="713" y="319.6" fill="#24225E" stroke="#24225E" stroke-width="0.3" font-size="8.4">C</text>
<text x="713" y="330.9" fill="#24225E" stroke="#24225E" stroke-width="0.3" font-size="8.4">1815</text>
<line x1="715.8" y1="297" x2="734.8" y2="297" stroke="#1414E0" stroke-width="1.7"/>
<line x1="720.8" y1="297.5" x2="715.8" y2="307.7" stroke="#1414E0" stroke-width="1.5"/>
<path d="M715.0 308.0 L715.6999999999999 302.3 L720.0999999999999 305.09999999999997 Z" stroke="#1414E0" stroke-width="0.6" fill="#1414E0"/>
<line x1="729.3" y1="297.5" x2="735.8" y2="307.7" stroke="#1414E0" stroke-width="1.5"/>
<line x1="608" y1="116" x2="608" y2="127" stroke="#7A2020" stroke-width="2"/>
<line x1="602" y1="116" x2="614" y2="116" stroke="#7A2020" stroke-width="2.2"/>
<text x="599.8" y="113.3" fill="#7A2020" stroke="#7A2020" stroke-width="0.3" font-size="8.2">VCC</text>
<line x1="640" y1="116" x2="640" y2="127" stroke="#7A2020" stroke-width="2"/>
<line x1="634" y1="116" x2="646" y2="116" stroke="#7A2020" stroke-width="2.2"/>
<text x="631.8" y="113.3" fill="#7A2020" stroke="#7A2020" stroke-width="0.3" font-size="8.2">VCC</text>
<line x1="351.3" y1="439.6" x2="351.3" y2="446.6" stroke="#7A2020" stroke-width="2"/>
<line x1="340.5" y1="446.6" x2="362.1" y2="446.6" stroke="#7A2020" stroke-width="2"/>
<line x1="343.8" y1="450.1" x2="358.8" y2="450.1" stroke="#7A2020" stroke-width="1.8"/>
<line x1="346.8" y1="453.1" x2="355.8" y2="453.1" stroke="#7A2020" stroke-width="1.6"/>
<line x1="350.3" y1="456.6" x2="352.3" y2="456.6" stroke="#7A2020" stroke-width="1.2"/>
<text x="342.0" y="465.3" fill="#7A2020" stroke="#7A2020" stroke-width="0.3" font-size="8.6">GND</text>
<line x1="426.2" y1="439.6" x2="426.2" y2="446.6" stroke="#7A2020" stroke-width="2"/>
<line x1="415.4" y1="446.6" x2="437.0" y2="446.6" stroke="#7A2020" stroke-width="2"/>
<line x1="418.7" y1="450.1" x2="433.7" y2="450.1" stroke="#7A2020" stroke-width="1.8"/>
<line x1="421.7" y1="453.1" x2="430.7" y2="453.1" stroke="#7A2020" stroke-width="1.6"/>
<line x1="425.2" y1="456.6" x2="427.2" y2="456.6" stroke="#7A2020" stroke-width="1.2"/>
<text x="416.9" y="465.3" fill="#7A2020" stroke="#7A2020" stroke-width="0.3" font-size="8.6">GND</text>
<line x1="693.3" y1="429" x2="693.3" y2="436" stroke="#7A2020" stroke-width="2"/>
<line x1="682.5" y1="436" x2="704.0999999999999" y2="436" stroke="#7A2020" stroke-width="2"/>
<line x1="685.8" y1="439.5" x2="700.8" y2="439.5" stroke="#7A2020" stroke-width="1.8"/>
<line x1="688.8" y1="442.5" x2="697.8" y2="442.5" stroke="#7A2020" stroke-width="1.6"/>
<line x1="692.3" y1="446" x2="694.3" y2="446" stroke="#7A2020" stroke-width="1.2"/>
<text x="684.0" y="454.7" fill="#7A2020" stroke="#7A2020" stroke-width="0.3" font-size="8.6">GND</text>
<path d="M381.7 276.9 L383.4 276.29999999999995 L385.1 277.5 L386.8 276.29999999999995 L388.5 277.5 L390.2 276.29999999999995 L391.9 277.5 L393.6 276.29999999999995 L395.3 277.5 L397.0 276.29999999999995 L398.7 277.5 L400.4 276.29999999999995 L402.1 277.5 L403.8 276.29999999999995 L405.5 277.5 L407.2 276.29999999999995 L408.9 277.5 L410.6 276.29999999999995 L412.3 277.5 L414.0 276.29999999999995 L415.7 277.5 L417.4 276.29999999999995" stroke="#F2A070" stroke-width="1" fill="none" opacity="0.9"/>
<path d="M425.6 312.6 L427.3 312.0 L429.0 313.20000000000005 L430.7 312.0 L432.4 313.20000000000005 L434.1 312.0 L435.8 313.20000000000005 L437.5 312.0 L439.2 313.20000000000005 L440.9 312.0 L442.6 313.20000000000005 L444.3 312.0 L446.0 313.20000000000005 L447.7 312.0 L449.4 313.20000000000005 L451.1 312.0 L452.8 313.20000000000005 L454.5 312.0 L456.2 313.20000000000005 L457.9 312.0 L459.6 313.20000000000005 L461.3 312.0 L463.0 313.20000000000005 L464.7 312.0 L466.4 313.20000000000005 L468.1 312.0 L469.8 313.20000000000005 L471.5 312.0 L473.2 313.20000000000005 L474.9 312.0 L476.6 313.20000000000005 L478.3 312.0 L480.0 313.20000000000005 L481.7 312.0 L483.4 313.20000000000005 L485.1 312.0 L486.8 313.20000000000005 L488.5 312.0 L490.2 313.20000000000005 L491.9 312.0" stroke="#F2A070" stroke-width="1" fill="none" opacity="0.9"/>
<path d="M693.4 312.6 L695.1 312.0 L696.8 313.20000000000005 L698.5 312.0 L700.2 313.20000000000005 L701.9 312.0 L703.6 313.20000000000005 L705.3 312.0 L707.0 313.20000000000005 L708.7 312.0 L710.4 313.20000000000005 L712.1 312.0 L713.8 313.20000000000005 L715.5 312.0 L717.2 313.20000000000005 L718.9 312.0 L720.6 313.20000000000005 L722.3 312.0 L724.0 313.20000000000005 L725.7 312.0 L727.4 313.20000000000005 L729.1 312.0 L730.8 313.20000000000005 L732.5 312.0 L734.2 313.20000000000005 L735.9 312.0 L737.6 313.20000000000005 L739.3 312.0 L741.0 313.20000000000005 L742.7 312.0 L744.4 313.20000000000005 L746.1 312.0 L747.8 313.20000000000005 L749.5 312.0 L751.2 313.20000000000005 L752.9 312.0 L754.6 313.20000000000005 L756.3 312.0 L758.0 313.20000000000005" stroke="#F2A070" stroke-width="1" fill="none" opacity="0.9"/>
<path d="M552.3 185.2 L554.0 184.6 L555.7 185.79999999999998 L557.4 184.6 L559.1 185.79999999999998 L560.8 184.6 L562.5 185.79999999999998 L564.2 184.6 L565.9 185.79999999999998 L567.6 184.6 L569.3 185.79999999999998 L571.0 184.6 L572.7 185.79999999999998 L574.4 184.6 L576.1 185.79999999999998 L577.8 184.6 L579.5 185.79999999999998 L581.2 184.6 L582.9 185.79999999999998 L584.6 184.6 L586.3 185.79999999999998 L588.0 184.6 L589.7 185.79999999999998 L591.4 184.6 L593.1 185.79999999999998 L594.8 184.6 L596.5 185.79999999999998 L598.2 184.6" stroke="#F2A070" stroke-width="1" fill="none" opacity="0.9"/>
<path d="M681 185.3 L682.7 184.70000000000002 L684.4 185.9 L686.1 184.70000000000002 L687.8 185.9 L689.5 184.70000000000002 L691.2 185.9 L692.9 184.70000000000002 L694.6 185.9 L696.3 184.70000000000002 L698.0 185.9 L699.7 184.70000000000002 L701.4 185.9 L703.1 184.70000000000002 L704.8 185.9 L706.5 184.70000000000002 L708.2 185.9 L709.9 184.70000000000002 L711.6 185.9 L713.3 184.70000000000002 L715.0 185.9 L716.7 184.70000000000002 L718.4 185.9 L720.1 184.70000000000002 L721.8 185.9 L723.5 184.70000000000002 L725.2 185.9 L726.9 184.70000000000002" stroke="#F2A070" stroke-width="1" fill="none" opacity="0.9"/>
</svg>
<div class="a" style="left:993px;top:76px;width:11px;height:500px;background:#F5F4EE"></div>
<div class="a sbtn" style="left:993px;top:77.5px;width:10.5px;height:11px"></div>
<div class="a" style="left:992.5px;top:200px;width:10.5px;height:266px;background:linear-gradient(90deg,#D4E0FC,#BCCEF8 30%,#B6C9F6 80%,#A8BCEC);border:1px solid #B0C4F0;border-radius:1px"></div>
<div class="a sbtn" style="left:993px;top:564px;width:10.5px;height:11px"></div>
<svg class="a" style="left:993px;top:77px" width="11" height="500"><path d="M3 7 L5.5 4.5 L8 7" stroke="#4A5CA0" stroke-width="1.6" fill="none"/><path d="M3 491 L5.5 493.5 L8 491" stroke="#4A5CA0" stroke-width="1.6" fill="none"/><path d="M3 331 H8 M3 333 H8 M3 335 H8" stroke="#EEF2FF" stroke-width=".9"/></svg>
<div class="a" style="left:203px;top:576px;width:790px;height:11px;background:#F5F4EE"></div>
<div class="a sbtn" style="left:203px;top:577px;width:10px;height:10px"></div>
<div class="a" style="left:352px;top:576.3px;width:541px;height:10.5px;background:linear-gradient(#D4E0FC,#BCCEF8 30%,#B6C9F6 80%,#A8BCEC);border:1px solid #B0C4F0;border-radius:1px"></div>
<div class="a sbtn" style="left:982px;top:576.5px;width:9.5px;height:10px"></div>
<svg class="a" style="left:203px;top:576px" width="790" height="11"><path d="M6.5 3 L4 5.5 L6.5 8" stroke="#4A5CA0" stroke-width="1.6" fill="none"/><path d="M784 3 L786.5 5.5 L784 8" stroke="#4A5CA0" stroke-width="1.6" fill="none"/><path d="M416 2.5 V8.5 M418 2.5 V8.5 M420 2.5 V8.5" stroke="#EEF2FF" stroke-width=".9"/></svg>
<div class="a" style="left:202px;top:586.5px;width:802px;height:14.5px;background:#ECE9D8;border-top:1px solid #A8A498"></div>
<div class="a" style="left:0;top:600.5px;width:1024px;height:1.5px;background:#A8A490"></div>
<svg class="a" style="left:205px;top:586px" width="45" height="16"><path d="M2 1 L6.5 14.5 L35 14.5 L39 1 Z" fill="#fff"/><path d="M2 1 L6.5 14.5 L35 14.5 L39 1" fill="none" stroke="#222" stroke-width="1"/><path d="M6.5 14.5 H35" stroke="#111" stroke-width="1.6"/></svg>
<div class="a" style="left:259px;top:602px;width:1px;height:15px;background:#B8B4A4"></div><div class="a" style="left:261.5px;top:602px;width:1px;height:15px;background:#D8D4C4"></div>
<div class="t" style="left:213px;top:589.09px;font-size:8.87px;color:#111;font-weight:bold;transform:scaleX(0.8987);transform-origin:0 0;">Editor</div>
<div class="t" style="left:937.2px;top:590.09px;font-size:8.87px;color:#777;;transform:scaleX(0.8636);transform-origin:0 0;">Mask Level</div>
<div class="t" style="left:982.7px;top:590.09px;font-size:8.87px;color:#777;;transform:scaleX(0.8030);transform-origin:0 0;">Clear</div>
<div class="a" style="left:906px;top:588px;width:1px;height:12px;background:#C8C4B4"></div><div class="a" style="left:933px;top:588px;width:1px;height:12px;background:#C8C4B4"></div><div class="a" style="left:978px;top:588px;width:1px;height:12px;background:#C8C4B4"></div><div class="a" style="left:1001px;top:588px;width:1px;height:12px;background:#C8C4B4"></div>
<svg class="a" style="left:890px;top:587px" width="45" height="14"><path d="M4.5 8.5 L10 3 L12.5 5.5 L7 11Z" fill="#E8E8F0" stroke="#707088" stroke-width=".9"/><rect x="3" y="10.5" width="4.5" height="2.2" fill="#6A5ED0"/><rect x="9.5" y="10.5" width="4.5" height="2.2" fill="#6A5ED0"/><circle cx="25" cy="5" r="2" fill="none" stroke="#B09020" stroke-width="1"/><circle cx="25" cy="10" r="2" fill="none" stroke="#B09020" stroke-width="1"/><path d="M29 4 L32 7 L29 10Z" fill="#333"/><path d="M34 4 L41 4 L38 8 L38 11 L37 11 L37 8Z" fill="#555"/></svg>
<div class="a" id="rp"></div>
<div class="a" style="left:1007px;top:56px;width:11px;height:115px;background:#F0EEE4;border-left:1px solid #C8C4B4"></div>
<div class="a" style="left:1008px;top:94px;width:10px;height:1px;background:#C8C4B4"></div>
<div class="a" style="left:1008px;top:135.5px;width:10px;height:1px;background:#C8C4B4"></div>
<div class="a" style="left:1018px;top:58.6px;width:40px;height:10px;transform-origin:0 0;transform:rotate(90deg)"><div class="t" style="left:0px;top:0.82px;font-size:8.72px;color:#333;;transform:scaleX(0.8896);transform-origin:0 0;">Favorites</div></div>
<div class="a" style="left:1018px;top:99px;width:40px;height:10px;transform-origin:0 0;transform:rotate(90deg)"><div class="t" style="left:0px;top:0.82px;font-size:8.72px;color:#333;;transform:scaleX(0.8519);transform-origin:0 0;">Clipboard</div></div>
<div class="a" style="left:1018px;top:139.2px;width:40px;height:10px;transform-origin:0 0;transform:rotate(90deg)"><div class="t" style="left:0px;top:0.82px;font-size:8.72px;color:#333;;transform:scaleX(0.8434);transform-origin:0 0;">Libraries</div></div>
<div class="a" id="status"></div>
<div class="t" style="left:3.1px;top:604.77px;font-size:9.01px;color:#222;;transform:scaleX(0.8713);transform-origin:0 0;">X:520 Y:250</div>
<div class="t" style="left:54.5px;top:604.77px;font-size:9.01px;color:#222;;transform:scaleX(0.8030);transform-origin:0 0;">Grid:10</div>
<div class="a" style="left:797px;top:604px;width:227px;height:13px;background:#EFEDE2"></div>
<div class="a" style="left:796.75px;top:604px;width:1px;height:13px;background:#C8C4B4"></div>
<div class="a" style="left:830.5px;top:604px;width:1px;height:13px;background:#C8C4B4"></div>
<div class="a" style="left:895.5px;top:604px;width:1px;height:13px;background:#C8C4B4"></div>
<div class="a" style="left:925.5px;top:604px;width:1px;height:13px;background:#C8C4B4"></div>
<div class="a" style="left:955.5px;top:604px;width:1px;height:13px;background:#C8C4B4"></div>
<div class="a" style="left:1006.75px;top:604px;width:1px;height:13px;background:#C8C4B4"></div>
<div class="t" style="left:801.75px;top:606.27px;font-size:9.01px;color:#444;;transform:scaleX(0.8325);transform-origin:0 0;"><u>S</u>ystem</div>
<div class="t" style="left:836.75px;top:606.27px;font-size:9.01px;color:#444;;transform:scaleX(0.8071);transform-origin:0 0;"><u>D</u>esign Compiler</div>
<div class="t" style="left:902.6px;top:606.27px;font-size:9.01px;color:#444;;transform:scaleX(0.8204);transform-origin:0 0;">S<u>C</u>H</div>
<div class="t" style="left:933.2px;top:606.27px;font-size:9.01px;color:#444;;transform:scaleX(0.8425);transform-origin:0 0;"><u>H</u>elp</div>
<div class="t" style="left:961.7px;top:606.27px;font-size:9.01px;color:#444;;transform:scaleX(0.8205);transform-origin:0 0;"><u>I</u>nstruments</div>
<div class="t" style="left:1009.2px;top:606.27px;font-size:9.01px;color:#444;;transform:scaleX(0.8939);transform-origin:0 0;">&gt;&gt;</div>
<div class="a" id="task"></div>
<div class="a" id="start"></div>
<svg class="a" style="left:8px;top:622px" width="13" height="14"><path d="M1 2 Q3 1 6 2 L5.5 6.5 Q3 5.5 0.5 6.5Z" fill="#E8502A"/><path d="M7 2 Q10 3 12.5 2 L12 6.5 Q9.5 7.5 6.5 6.5Z" fill="#60B030"/><path d="M0.5 7.5 Q3 6.5 5.5 7.5 L5 12 Q2.5 11 0 12Z" fill="#3A78E0"/><path d="M6.5 7.5 Q9 8.5 12 7.5 L11.5 12 Q9 13 6 12Z" fill="#F0C020"/></svg>
<div class="t" style="left:24.5px;top:623.31px;font-size:11.92px;color:#fff;font-weight:bold;font-style:italic;text-shadow:1px 1px 1px #205020;transform:scaleX(1.0266);transform-origin:0 0;">start</div>
<svg class="a" style="left:76px;top:620px" width="60" height="18">
<path d="M4.5 12.5 L10.5 6" stroke="#E8F0E0" stroke-width="4.6" stroke-linecap="round"/><path d="M8 8.7 L10.5 6" stroke="#90D030" stroke-width="4.6" stroke-linecap="round"/>
<circle cx="24.5" cy="9" r="5" fill="#DB4437"/><path d="M24.5 9 L29.3 7.5 A5 5 0 0 1 22 13.3Z" fill="#F4C20D"/><path d="M24.5 9 L22 13.3 A5 5 0 0 1 20 6.5Z" fill="#0F9D58"/><circle cx="24.5" cy="9" r="2.2" fill="#4285F4" stroke="#fff" stroke-width=".8"/>
<circle cx="40" cy="9.5" r="4" fill="none" stroke="#3AA0F0" stroke-width="2.2"/><path d="M36.5 9.5 H43.5" stroke="#3AA0F0" stroke-width="1.4"/><path d="M35 14 Q36 5 45 4" stroke="#E8C040" stroke-width="1.2" fill="none"/>
<path d="M54 4.5 L56 6.5 L54 8.5 M57 4.5 L59 6.5 L57 8.5" stroke="#C8D8F8" stroke-width="1" fill="none"/></svg>
<div class="a tbtn" style="left:141px;top:620px;width:109px;height:17.5px"></div>
<div class="a tbtn" style="left:255.5px;top:620px;width:111.5px;height:17.5px"></div>
<div class="a tbtn act" style="left:368.5px;top:620px;width:112.5px;height:17.5px"></div>
<svg class="a" style="left:147px;top:623px" width="12" height="12"><circle cx="6" cy="6" r="5" fill="#DB4437"/><path d="M6 6 L10.8 4.5 A5 5 0 0 1 3.5 10.3Z" fill="#F4C20D"/><path d="M6 6 L3.5 10.3 A5 5 0 0 1 1.5 3.5Z" fill="#0F9D58"/><circle cx="6" cy="6" r="2.2" fill="#4285F4" stroke="#fff" stroke-width=".8"/></svg>
<div class="t" style="left:161.8px;top:624.94px;font-size:8.58px;color:#fff;;transform:scaleX(0.8930);transform-origin:0 0;">Upanh.com - - Google...</div>
<svg class="a" style="left:262px;top:623px" width="12" height="12"><rect x="0.5" y="2" width="10" height="8" fill="#F0D070" stroke="#B09030" stroke-width=".6"/><rect x="5" y="5" width="6" height="6" fill="#E8A040"/></svg>
<div class="t" style="left:276px;top:624.94px;font-size:8.58px;color:#fff;;transform:scaleX(0.9478);transform-origin:0 0;">Affter Efect</div>
<svg class="a" style="left:375px;top:622px" width="12" height="12"><path d="M1 7 L6 3 L11 5 L6 9Z" fill="#484848"/><path d="M1 7 L6 9 L6 11 L1 9Z" fill="#181818"/><path d="M3 6.5 L6 4.5 L9 5" stroke="#eee" stroke-width="1" fill="none"/></svg>
<div class="t" style="left:389.8px;top:624.94px;font-size:8.58px;color:#fff;;transform:scaleX(0.8817);transform-origin:0 0;">Altium Designer Sum...</div>
<div class="a" id="tray"></div>
<svg class="a" style="left:886px;top:620px" width="138" height="18">
<circle cx="7" cy="9" r="5.5" fill="#3A8AE8" stroke="#A8D0F8" stroke-width="1"/><path d="M8 6 L5.5 9 L8 12" stroke="#fff" stroke-width="1.4" fill="none"/>
<rect x="16" y="4" width="6" height="5" fill="#A8C8E8"/><rect x="20" y="8" width="6" height="5" fill="#C8D8E8"/><path d="M18 13 L24 13" stroke="#506080"/>
<circle cx="34" cy="8" r="3.5" fill="#506070" stroke="#C8C8C8" stroke-width="1"/>
<path d="M43 13 L50 5" stroke="#F0F0E8" stroke-width="4" stroke-linecap="round"/><path d="M47 8.5 L50 5" stroke="#90D030" stroke-width="4" stroke-linecap="round"/>
<ellipse cx="60" cy="9" rx="4" ry="3.5" fill="#F0F8E0"/>
<rect x="67" y="4" width="9" height="10" fill="#F8E8E8" stroke="#D8B0B0" stroke-width=".6"/><path d="M68.8 5.5 L71.5 12.5 L74.2 5.5" stroke="#D03030" stroke-width="1.6" fill="none"/>
<circle cx="86" cy="9" r="4.5" fill="#3AA040"/><path d="M82 8 Q86 4 90 8" stroke="#1A5AC0" stroke-width="2" fill="none"/>
</svg>
<div class="t" style="left:984.1px;top:624.69px;font-size:8.28px;color:#fff;;transform:scaleX(0.9232);transform-origin:0 0;">7:31 AM</div>
</body></html>
